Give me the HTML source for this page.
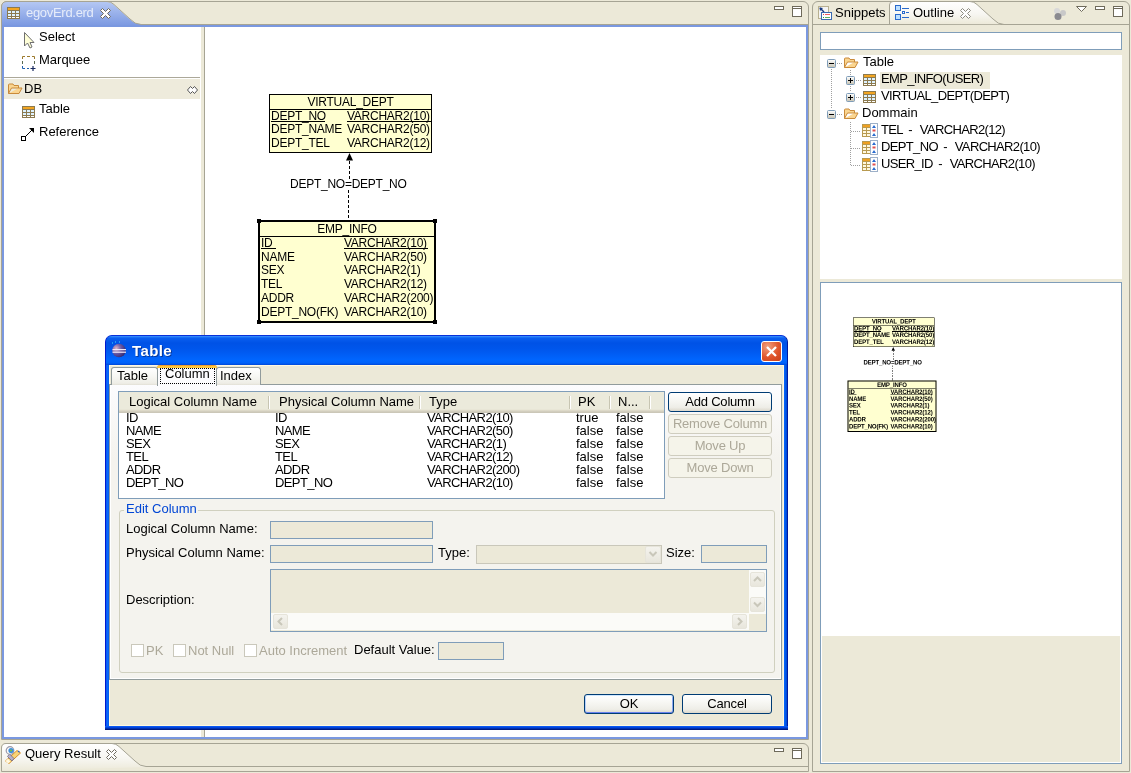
<!DOCTYPE html>
<html><head><meta charset="utf-8">
<style>
*{box-sizing:border-box;margin:0;padding:0}
html,body{width:1131px;height:773px;overflow:hidden;background:#ECE9D8;font-family:"Liberation Sans",sans-serif;font-size:13px;color:#000}
.a{position:absolute}
.t{position:absolute;white-space:nowrap;line-height:14px;will-change:transform}
svg{position:absolute;overflow:visible}
.btn{position:absolute;border:1px solid #003C74;border-radius:3px;background:linear-gradient(#FFFFFF,#F6F6F2 45%,#EEEDE7 80%,#DCD8CC);text-align:center;line-height:18px;font-size:13px;letter-spacing:-0.2px;will-change:transform}
.btnd{position:absolute;border:1px solid #CFCDBF;border-radius:3px;background:#F5F4EA;text-align:center;line-height:18px;color:#ACA899;font-size:13px;letter-spacing:-0.2px;will-change:transform}
.fld{position:absolute;border:1px solid #7F9DB9;background:#ECE9D8}
.chk{position:absolute;width:13px;height:13px;border:1px solid #CAC8BB;background:#fff}
</style></head><body>

<div class="a" style="left:1px;top:1px;width:808px;height:739px;border:1px solid #A6A494;border-radius:6px 6px 0 0;background:#ECE9D8"></div>
<svg style="left:0px;top:0px" width="160" height="27" viewBox="0 0 160 27">
  <defs><linearGradient id="gtab" x1="0" y1="0" x2="0" y2="1"><stop offset="0" stop-color="#B4C7F3"/><stop offset="1" stop-color="#7896E0"/></linearGradient></defs>
  <path d="M2,27 L2,7 Q2,2 7,2 L107,2 Q111,2 114,5 L130,19.5 Q135,24 141,24 L160,24 L160,27 Z" fill="url(#gtab)"/>
  <path d="M1.5,25 L1.5,7 Q1.5,1.5 7,1.5 L107,1.5 Q111,1.5 114,4.5 L130,19 Q135,24.5 141,24.5 L160,24.5" fill="none" stroke="#A6A494" stroke-width="1"/></svg>
<div class="a" style="left:142px;top:24px;width:667px;height:1px;background:#A6A494"></div>
<div class="a" style="left:2px;top:25px;width:806px;height:714px;border:2px solid #7A98E0;background:#fff"></div>
<svg style="left:7px;top:7px" width="13" height="12" viewBox="0 0 13 12">
  <rect x="0" y="0" width="13" height="12" fill="#8C7A50"/>
  <rect x="1" y="1" width="11" height="2" fill="#F2A522"/>
  <g fill="#DDF2FF"><rect x="1" y="4" width="3" height="2"/><rect x="5" y="4" width="3" height="2"/><rect x="9" y="4" width="3" height="2"/>
  <rect x="1" y="7" width="3" height="2"/><rect x="5" y="7" width="3" height="2"/><rect x="9" y="7" width="3" height="2"/></g>
  <g fill="#fff"><rect x="1" y="10" width="3" height="1"/><rect x="5" y="10" width="3" height="1"/><rect x="9" y="10" width="3" height="1"/></g></svg>
<div class="t" style="left:26px;top:6px;font-size:13px;letter-spacing:-0.3px;color:#E6ECFA;">egovErd.erd</div>
<svg style="left:100px;top:8px" width="11" height="11" viewBox="0 0 11 11"><path d="M0.5,2.5 L2.5,0.5 L5.5,3.5 L8.5,0.5 L10.5,2.5 L7.5,5.5 L10.5,8.5 L8.5,10.5 L5.5,7.5 L2.5,10.5 L0.5,8.5 L3.5,5.5 Z" fill="#fff" stroke="#6E6A5E" stroke-width="1"/></svg>
<div class="a" style="left:774px;top:6px;width:10px;height:4px;border:1px solid #6E6A5A;background:#fff"></div>
<div class="a" style="left:792px;top:6px;width:10px;height:11px;border:1px solid #6E6A5A;box-shadow:inset 0 1px 0 #fff,inset 0 2px 0 #6E6A5A;background:#fff"></div>
<div class="a" style="left:201px;top:27px;width:3px;height:710px;background:#ECE9D8"></div>
<div class="a" style="left:204px;top:27px;width:1px;height:710px;background:#A6A494"></div>
<svg style="left:23px;top:31px" width="13" height="18" viewBox="0 0 13 18"><path d="M1.5,1.5 L1.5,15 L4.5,12 L7,17 L9,16 L7,11.5 L11,11.5 Z" fill="#FFFFD8" stroke="#707070" stroke-width="1"/></svg>
<div class="t" style="left:39px;top:30px;font-size:13px;letter-spacing:0px;">Select</div>
<svg style="left:22px;top:56px" width="14" height="16" viewBox="0 0 14 16"><path d="M0.5,3 V0.5 H3 M5,0.5 H8 M10,0.5 H12.5 V3" fill="none" stroke="#9C7A2C"/><path d="M0.5,5 V8 M12.5,5 V8" fill="none" stroke="#5A6A50"/><path d="M0.5,10 V12.5 H3 M5,12.5 H7" fill="none" stroke="#2060B0"/><path d="M8.5,12.5 H13.5 M11,10 V15" stroke="#1A2A60" stroke-width="1.2"/></svg>
<div class="t" style="left:39px;top:53px;font-size:13px;letter-spacing:0px;">Marquee</div>
<div class="a" style="left:4px;top:77px;width:196px;height:1px;background:#ACA899"></div>
<div class="a" style="left:4px;top:78px;width:196px;height:1px;background:#fff"></div>
<div class="a" style="left:4px;top:79px;width:196px;height:20px;background:#EEEBDC"></div>
<svg style="left:7px;top:83px" width="16" height="12" viewBox="0 0 16 12"><path d="M1.5,10.5 L1.5,2 Q1.5,1 2.5,1 L6,1 L7,2.5 L11.5,2.5 L11.5,5 L4.5,5 L1.5,10.5 L12,10.5 L15,5 L11.5,5" fill="#FAD590" stroke="#C98A3A" stroke-width="1"/></svg>
<div class="t" style="left:24px;top:82px;font-size:13px;letter-spacing:0px;">DB</div>
<svg style="left:187px;top:86px" width="11" height="8" viewBox="0 0 11 8"><path d="M0.5,4 L3.5,0.5 L5.5,2.5 L7.5,0.5 L10.5,4 L7.5,7.5 L5.5,5.5 L3.5,7.5 Z" fill="#fff" stroke="#555" stroke-width="1"/></svg>
<svg style="left:22px;top:106px" width="13" height="12" viewBox="0 0 13 12">
  <rect x="0" y="0" width="13" height="12" fill="#8C7A50"/>
  <rect x="1" y="1" width="11" height="2" fill="#F2A522"/>
  <g fill="#DDF2FF"><rect x="1" y="4" width="3" height="2"/><rect x="5" y="4" width="3" height="2"/><rect x="9" y="4" width="3" height="2"/>
  <rect x="1" y="7" width="3" height="2"/><rect x="5" y="7" width="3" height="2"/><rect x="9" y="7" width="3" height="2"/></g>
  <g fill="#fff"><rect x="1" y="10" width="3" height="1"/><rect x="5" y="10" width="3" height="1"/><rect x="9" y="10" width="3" height="1"/></g></svg>
<div class="t" style="left:39px;top:102px;font-size:13px;letter-spacing:0px;">Table</div>
<svg style="left:21px;top:128px" width="14" height="13" viewBox="0 0 14 13"><rect x="0.5" y="8.5" width="4" height="4" fill="#fff" stroke="#000"/><path d="M4.5,8.5 L11,2" stroke="#000" stroke-width="1"/><path d="M8,0 L13,0 L13,5 Z" fill="#000"/></svg>
<div class="t" style="left:39px;top:125px;font-size:13px;letter-spacing:0px;">Reference</div>
<div class="a" style="left:205px;top:27px;width:600px;height:710px">
<div class="a" style="left:64px;top:67px;width:163px;height:59px;border:1px solid #000;background:#FFFFD0"></div>
<div class="a" style="left:65px;top:82px;width:161px;height:1px;background:#000"></div>
<div class="t" style="left:64px;top:68px;font-size:12px;letter-spacing:-0.25px;width:163px;text-align:center;">VIRTUAL_DEPT</div>
<div class="t" style="left:66px;top:82px;font-size:12px;letter-spacing:-0.25px;">DEPT_NO</div>
<div class="t" style="left:142px;top:82px;font-size:12px;letter-spacing:-0.25px;">VARCHAR2(10)</div>
<div class="t" style="left:66px;top:95px;font-size:12px;letter-spacing:-0.25px;">DEPT_NAME</div>
<div class="t" style="left:142px;top:95px;font-size:12px;letter-spacing:-0.25px;">VARCHAR2(50)</div>
<div class="t" style="left:66px;top:109px;font-size:12px;letter-spacing:-0.25px;">DEPT_TEL</div>
<div class="t" style="left:142px;top:109px;font-size:12px;letter-spacing:-0.25px;">VARCHAR2(12)</div>
<div class="a" style="left:66px;top:94px;width:54px;height:1px;background:#000"></div>
<div class="a" style="left:142px;top:94px;width:84px;height:1px;background:#000"></div>
<div class="a" style="left:53px;top:193px;width:178px;height:103px;border:2px solid #000;background:#FFFFD0"></div>
<div class="a" style="left:55px;top:209px;width:174px;height:1px;background:#000"></div>
<div class="t" style="left:53px;top:195px;font-size:12px;letter-spacing:-0.25px;width:178px;text-align:center;">EMP_INFO</div>
<div class="t" style="left:56px;top:209px;font-size:12px;letter-spacing:-0.25px;">ID</div>
<div class="t" style="left:139px;top:209px;font-size:12px;letter-spacing:-0.25px;">VARCHAR2(10)</div>
<div class="t" style="left:56px;top:223px;font-size:12px;letter-spacing:-0.25px;">NAME</div>
<div class="t" style="left:139px;top:223px;font-size:12px;letter-spacing:-0.25px;">VARCHAR2(50)</div>
<div class="t" style="left:56px;top:236px;font-size:12px;letter-spacing:-0.25px;">SEX</div>
<div class="t" style="left:139px;top:236px;font-size:12px;letter-spacing:-0.25px;">VARCHAR2(1)</div>
<div class="t" style="left:56px;top:250px;font-size:12px;letter-spacing:-0.25px;">TEL</div>
<div class="t" style="left:139px;top:250px;font-size:12px;letter-spacing:-0.25px;">VARCHAR2(12)</div>
<div class="t" style="left:56px;top:264px;font-size:12px;letter-spacing:-0.25px;">ADDR</div>
<div class="t" style="left:139px;top:264px;font-size:12px;letter-spacing:-0.25px;">VARCHAR2(200)</div>
<div class="t" style="left:56px;top:278px;font-size:12px;letter-spacing:-0.25px;">DEPT_NO(FK)</div>
<div class="t" style="left:139px;top:278px;font-size:12px;letter-spacing:-0.25px;">VARCHAR2(10)</div>
<div class="a" style="left:56px;top:221px;width:15px;height:1px;background:#000"></div>
<div class="a" style="left:139px;top:221px;width:84px;height:1px;background:#000"></div>
<div class="a" style="left:52px;top:192px;width:4px;height:4px;background:#000"></div>
<div class="a" style="left:228px;top:192px;width:4px;height:4px;background:#000"></div>
<div class="a" style="left:52px;top:293px;width:4px;height:4px;background:#000"></div>
<div class="a" style="left:228px;top:293px;width:4px;height:4px;background:#000"></div>
<div class="a" style="left:144px;top:134px;width:1px;height:19px;background:repeating-linear-gradient(#000 0 3px,transparent 3px 5px)"></div>
<div class="a" style="left:143px;top:163px;width:1px;height:30px;background:repeating-linear-gradient(#000 0 3px,transparent 3px 5px)"></div>
<svg style="left:141px;top:126px" width="7" height="8"><path d="M3.5,0 L7,7.5 L0,7.5 Z" fill="#000"/></svg>
<div class="t" style="left:85px;top:150px;font-size:12px;letter-spacing:-0.25px;">DEPT_NO=DEPT_NO</div>
</div>
<div class="a" style="left:1px;top:743px;width:808px;height:29px;border:1px solid #A6A494;border-radius:6px 6px 0 0;background:#ECE9D8"></div>
<svg style="left:0px;top:742px" width="170" height="26" viewBox="0 0 170 26">
  <defs><linearGradient id="gqw" x1="0" y1="0" x2="0" y2="1"><stop offset="0" stop-color="#FFFFFF"/><stop offset="0.55" stop-color="#F7F6F1"/><stop offset="1" stop-color="#ECE9D8"/></linearGradient></defs>
  <path d="M1.5,29 L1.5,6 Q1.5,1.5 6,1.5 L112,1.5 Q116,1.5 119,4.5 L135,19 Q140,24.5 146,24.5 L170,24.5" fill="url(#gqw)" stroke="#A6A494" stroke-width="1"/></svg>
<div class="a" style="left:147px;top:766px;width:662px;height:1px;background:#A6A494"></div>
<svg style="left:4px;top:746px" width="18" height="18" viewBox="0 0 18 18">
  <path d="M1.5,15 L13,4.5 L16.5,7 L5,17.5 Z" fill="#F8D478" stroke="#D89028" stroke-width="1"/>
  <path d="M1.5,15 L4,12.8 L6.5,15.5 L4,17.5 Z" fill="#FFF8E0"/>
  <path d="M14,5 L15.5,6.2" stroke="#3060C0" stroke-width="1.2"/>
  <path d="M5.5,8 L10,12.5 L8,15 L3.5,10.5 Z" fill="#B8B0C8" stroke="#706880" stroke-width="0.8"/>
  <circle cx="6" cy="4.5" r="3.8" fill="none" stroke="#9A98A8" stroke-width="1.2"/>
  <circle cx="7" cy="4.5" r="2.6" fill="#3A90E0"/><circle cx="7" cy="4.5" r="1.1" fill="#7CC040"/></svg>
<div class="t" style="left:25px;top:747px;font-size:13px;letter-spacing:0px;">Query Result</div>
<svg style="left:106px;top:749px" width="11" height="11" viewBox="0 0 11 11"><path d="M0.5,2.5 L2.5,0.5 L5.5,3.5 L8.5,0.5 L10.5,2.5 L7.5,5.5 L10.5,8.5 L8.5,10.5 L5.5,7.5 L2.5,10.5 L0.5,8.5 L3.5,5.5 Z" fill="#fff" stroke="#6E6A5E" stroke-width="1"/></svg>
<div class="a" style="left:774px;top:748px;width:10px;height:4px;border:1px solid #6E6A5A;background:#fff"></div>
<div class="a" style="left:792px;top:748px;width:10px;height:11px;border:1px solid #6E6A5A;box-shadow:inset 0 1px 0 #fff,inset 0 2px 0 #6E6A5A;background:#fff"></div>
<div class="a" style="left:812px;top:1px;width:318px;height:771px;border:1px solid #A6A494;border-radius:6px 6px 0 0;background:#ECE9D8"></div>
<div class="a" style="left:813px;top:24px;width:316px;height:1px;background:#A6A494"></div>
<svg style="left:812px;top:0px" width="319" height="26" viewBox="0 0 319 26">
  <defs><linearGradient id="gow" x1="0" y1="0" x2="0" y2="1"><stop offset="0" stop-color="#FFFFFF"/><stop offset="0.55" stop-color="#F7F6F1"/><stop offset="1" stop-color="#ECE9D8"/></linearGradient></defs>
  <path d="M77.5,24 L77.5,5 Q77.5,1.5 81,1.5 L158,1.5 Q162,1.5 165,4.5 L181,19 Q186,24.5 192,24.5 L317,24.5" fill="url(#gow)" stroke="#A6A494" stroke-width="1"/></svg>
<svg style="left:818px;top:6px" width="14" height="14" viewBox="0 0 14 14">
  <rect x="0.5" y="0.5" width="10" height="12" fill="#F4F4F4" stroke="#B8B090"/>
  <path d="M2,2 L6,6" stroke="#1A3A80" stroke-width="1.5"/><path d="M1.5,1.5 L5,2 L2,5 Z" fill="#1A3A80"/>
  <rect x="3.5" y="6.5" width="10" height="7" fill="#fff" stroke="#3A6AB0"/>
  <rect x="5" y="8" width="1" height="1" fill="#E04040"/><rect x="7" y="8" width="5" height="1" fill="#F06060"/>
  <rect x="5" y="11" width="1" height="1" fill="#20A040"/><rect x="7" y="11" width="5" height="1" fill="#60B060"/></svg>
<div class="t" style="left:835px;top:6px;font-size:13px;letter-spacing:0px;">Snippets</div>
<svg style="left:895px;top:5px" width="14" height="15" viewBox="0 0 14 15">
  <rect x="0.5" y="0.5" width="5" height="5" fill="#BDE0FF" stroke="#2A6ACC"/>
  <rect x="0.5" y="9.5" width="5" height="5" fill="#BDE0FF" stroke="#2A6ACC"/>
  <rect x="7" y="3" width="7" height="1" fill="#2A6ACC"/><rect x="7.5" y="6.5" width="2" height="2" fill="#fff" stroke="#2A6ACC"/><rect x="11" y="7" width="3" height="1" fill="#2A6ACC"/><rect x="7" y="12" width="7" height="1" fill="#2A6ACC"/></svg>
<div class="t" style="left:913px;top:6px;font-size:13px;letter-spacing:0px;">Outline</div>
<svg style="left:960px;top:8px" width="11" height="11" viewBox="0 0 11 11"><path d="M0.5,2.5 L2.5,0.5 L5.5,3.5 L8.5,0.5 L10.5,2.5 L7.5,5.5 L10.5,8.5 L8.5,10.5 L5.5,7.5 L2.5,10.5 L0.5,8.5 L3.5,5.5 Z" fill="#fff" stroke="#8C8A80" stroke-width="1"/></svg>
<svg style="left:1053px;top:7px" width="15" height="14" viewBox="0 0 15 14"><circle cx="4" cy="4" r="3" fill="#D8D8D8"/><circle cx="10" cy="6" r="3" fill="#C8C8C8"/><circle cx="5" cy="9.5" r="3.5" fill="#8A8A90"/></svg>
<svg style="left:1076px;top:6px" width="11" height="6" viewBox="0 0 11 6"><path d="M0.5,0.5 L10.5,0.5 L5.5,5.5 Z" fill="#fff" stroke="#6E6A5A"/></svg>
<div class="a" style="left:1095px;top:6px;width:10px;height:4px;border:1px solid #6E6A5A;background:#fff"></div>
<div class="a" style="left:1113px;top:6px;width:10px;height:11px;border:1px solid #6E6A5A;box-shadow:inset 0 1px 0 #fff,inset 0 2px 0 #6E6A5A;background:#fff"></div>
<div class="a" style="left:820px;top:32px;width:302px;height:18px;border:1px solid #7F9DB9;background:#fff"></div>
<div class="a" style="left:820px;top:55px;width:302px;height:224px;background:#fff"></div>
<div class="a" style="left:880px;top:72px;width:110px;height:17px;background:#ECE9D8"></div>
<div class="a" style="left:831px;top:69px;width:1px;height:40px;background:repeating-linear-gradient(#A0A0A0 0 1px,transparent 1px 2px)"></div>
<div class="a" style="left:837px;top:63px;width:5px;height:1px;background:repeating-linear-gradient(90deg,#A0A0A0 0 1px,transparent 1px 2px)"></div>
<div class="a" style="left:837px;top:114px;width:5px;height:1px;background:repeating-linear-gradient(90deg,#A0A0A0 0 1px,transparent 1px 2px)"></div>
<div class="a" style="left:850px;top:70px;width:1px;height:22px;background:repeating-linear-gradient(#A0A0A0 0 1px,transparent 1px 2px)"></div>
<div class="a" style="left:856px;top:80px;width:6px;height:1px;background:repeating-linear-gradient(90deg,#A0A0A0 0 1px,transparent 1px 2px)"></div>
<div class="a" style="left:856px;top:97px;width:6px;height:1px;background:repeating-linear-gradient(90deg,#A0A0A0 0 1px,transparent 1px 2px)"></div>
<div class="a" style="left:850px;top:122px;width:1px;height:44px;background:repeating-linear-gradient(#A0A0A0 0 1px,transparent 1px 2px)"></div>
<div class="a" style="left:851px;top:131px;width:10px;height:1px;background:repeating-linear-gradient(90deg,#A0A0A0 0 1px,transparent 1px 2px)"></div>
<div class="a" style="left:851px;top:148px;width:10px;height:1px;background:repeating-linear-gradient(90deg,#A0A0A0 0 1px,transparent 1px 2px)"></div>
<div class="a" style="left:851px;top:165px;width:10px;height:1px;background:repeating-linear-gradient(90deg,#A0A0A0 0 1px,transparent 1px 2px)"></div>
<svg style="left:827px;top:59px" width="9" height="9" viewBox="0 0 9 9"><defs><linearGradient id="gx82759" x1="0" y1="0" x2="0" y2="1"><stop offset="0" stop-color="#fff"/><stop offset="1" stop-color="#C6C2B2"/></linearGradient></defs><rect x="0.5" y="0.5" width="8" height="8" rx="1" fill="url(#gx82759)" stroke="#7F9DB9"/><path d="M2,4.5 h5" stroke="#000" stroke-width="1"/></svg>
<svg style="left:843px;top:57px" width="16" height="12" viewBox="0 0 16 12"><path d="M1.5,10.5 L1.5,2 Q1.5,1 2.5,1 L6,1 L7,2.5 L11.5,2.5 L11.5,5 L4.5,5 L1.5,10.5 L12,10.5 L15,5 L11.5,5" fill="#FAD590" stroke="#C98A3A" stroke-width="1"/></svg>
<svg style="left:846px;top:76px" width="9" height="9" viewBox="0 0 9 9"><defs><linearGradient id="gx84676" x1="0" y1="0" x2="0" y2="1"><stop offset="0" stop-color="#fff"/><stop offset="1" stop-color="#C6C2B2"/></linearGradient></defs><rect x="0.5" y="0.5" width="8" height="8" rx="1" fill="url(#gx84676)" stroke="#7F9DB9"/><path d="M2,4.5 h5" stroke="#000" stroke-width="1"/><path d="M4.5,2 v5" stroke="#000" stroke-width="1"/></svg>
<svg style="left:863px;top:74px" width="13" height="12" viewBox="0 0 13 12">
  <rect x="0" y="0" width="13" height="12" fill="#8C7A50"/>
  <rect x="1" y="1" width="11" height="2" fill="#F2A522"/>
  <g fill="#DDF2FF"><rect x="1" y="4" width="3" height="2"/><rect x="5" y="4" width="3" height="2"/><rect x="9" y="4" width="3" height="2"/>
  <rect x="1" y="7" width="3" height="2"/><rect x="5" y="7" width="3" height="2"/><rect x="9" y="7" width="3" height="2"/></g>
  <g fill="#fff"><rect x="1" y="10" width="3" height="1"/><rect x="5" y="10" width="3" height="1"/><rect x="9" y="10" width="3" height="1"/></g></svg>
<svg style="left:846px;top:93px" width="9" height="9" viewBox="0 0 9 9"><defs><linearGradient id="gx84693" x1="0" y1="0" x2="0" y2="1"><stop offset="0" stop-color="#fff"/><stop offset="1" stop-color="#C6C2B2"/></linearGradient></defs><rect x="0.5" y="0.5" width="8" height="8" rx="1" fill="url(#gx84693)" stroke="#7F9DB9"/><path d="M2,4.5 h5" stroke="#000" stroke-width="1"/><path d="M4.5,2 v5" stroke="#000" stroke-width="1"/></svg>
<svg style="left:863px;top:91px" width="13" height="12" viewBox="0 0 13 12">
  <rect x="0" y="0" width="13" height="12" fill="#8C7A50"/>
  <rect x="1" y="1" width="11" height="2" fill="#F2A522"/>
  <g fill="#DDF2FF"><rect x="1" y="4" width="3" height="2"/><rect x="5" y="4" width="3" height="2"/><rect x="9" y="4" width="3" height="2"/>
  <rect x="1" y="7" width="3" height="2"/><rect x="5" y="7" width="3" height="2"/><rect x="9" y="7" width="3" height="2"/></g>
  <g fill="#fff"><rect x="1" y="10" width="3" height="1"/><rect x="5" y="10" width="3" height="1"/><rect x="9" y="10" width="3" height="1"/></g></svg>
<svg style="left:827px;top:110px" width="9" height="9" viewBox="0 0 9 9"><defs><linearGradient id="gx827110" x1="0" y1="0" x2="0" y2="1"><stop offset="0" stop-color="#fff"/><stop offset="1" stop-color="#C6C2B2"/></linearGradient></defs><rect x="0.5" y="0.5" width="8" height="8" rx="1" fill="url(#gx827110)" stroke="#7F9DB9"/><path d="M2,4.5 h5" stroke="#000" stroke-width="1"/></svg>
<svg style="left:843px;top:108px" width="16" height="12" viewBox="0 0 16 12"><path d="M1.5,10.5 L1.5,2 Q1.5,1 2.5,1 L6,1 L7,2.5 L11.5,2.5 L11.5,5 L4.5,5 L1.5,10.5 L12,10.5 L15,5 L11.5,5" fill="#FAD590" stroke="#C98A3A" stroke-width="1"/></svg>
<svg style="left:862px;top:123px" width="16" height="15" viewBox="0 0 16 15">
  <rect x="0" y="1" width="9" height="13" fill="#B89A50"/><rect x="1" y="2" width="8" height="2" fill="#F0A020"/>
  <g fill="#FFF8E0"><rect x="1" y="5" width="3" height="2"/><rect x="5" y="5" width="3" height="2"/><rect x="1" y="8" width="3" height="2"/><rect x="5" y="8" width="3" height="2"/><rect x="1" y="11" width="3" height="2"/><rect x="5" y="11" width="3" height="2"/></g>
  <rect x="8.5" y="0.5" width="7" height="14" fill="#fff" stroke="#9DB0C8"/>
  <path d="M12,2 L14,5 L10,5 Z M12,10 L14,13 L10,13 Z" fill="#2A6CD0"/><rect x="10.5" y="6.5" width="3" height="2" fill="#E05050"/></svg>
<svg style="left:862px;top:140px" width="16" height="15" viewBox="0 0 16 15">
  <rect x="0" y="1" width="9" height="13" fill="#B89A50"/><rect x="1" y="2" width="8" height="2" fill="#F0A020"/>
  <g fill="#FFF8E0"><rect x="1" y="5" width="3" height="2"/><rect x="5" y="5" width="3" height="2"/><rect x="1" y="8" width="3" height="2"/><rect x="5" y="8" width="3" height="2"/><rect x="1" y="11" width="3" height="2"/><rect x="5" y="11" width="3" height="2"/></g>
  <rect x="8.5" y="0.5" width="7" height="14" fill="#fff" stroke="#9DB0C8"/>
  <path d="M12,2 L14,5 L10,5 Z M12,10 L14,13 L10,13 Z" fill="#2A6CD0"/><rect x="10.5" y="6.5" width="3" height="2" fill="#E05050"/></svg>
<svg style="left:862px;top:157px" width="16" height="15" viewBox="0 0 16 15">
  <rect x="0" y="1" width="9" height="13" fill="#B89A50"/><rect x="1" y="2" width="8" height="2" fill="#F0A020"/>
  <g fill="#FFF8E0"><rect x="1" y="5" width="3" height="2"/><rect x="5" y="5" width="3" height="2"/><rect x="1" y="8" width="3" height="2"/><rect x="5" y="8" width="3" height="2"/><rect x="1" y="11" width="3" height="2"/><rect x="5" y="11" width="3" height="2"/></g>
  <rect x="8.5" y="0.5" width="7" height="14" fill="#fff" stroke="#9DB0C8"/>
  <path d="M12,2 L14,5 L10,5 Z M12,10 L14,13 L10,13 Z" fill="#2A6CD0"/><rect x="10.5" y="6.5" width="3" height="2" fill="#E05050"/></svg>
<div class="t" style="left:863px;top:55px;font-size:13px;letter-spacing:0px;">Table</div>
<div class="t" style="left:881px;top:72px;font-size:13px;letter-spacing:-0.65px;">EMP_INFO(USER)</div>
<div class="t" style="left:881px;top:89px;font-size:13px;letter-spacing:-0.65px;">VIRTUAL_DEPT(DEPT)</div>
<div class="t" style="left:862px;top:106px;font-size:13px;letter-spacing:0px;">Dommain</div>
<div class="t" style="left:881px;top:123px;font-size:13px;letter-spacing:-0.65px;">TEL<span style="letter-spacing:1.8px"> - </span>VARCHAR2(12)</div>
<div class="t" style="left:881px;top:140px;font-size:13px;letter-spacing:-0.65px;">DEPT_NO<span style="letter-spacing:1.8px"> - </span>VARCHAR2(10)</div>
<div class="t" style="left:881px;top:157px;font-size:13px;letter-spacing:-0.65px;">USER_ID<span style="letter-spacing:1.8px"> - </span>VARCHAR2(10)</div>
<div class="a" style="left:820px;top:282px;width:302px;height:482px;border:1px solid #7F9DB9;background:#fff"></div>
<div class="a" style="left:821px;top:283.5px;width:600px;height:710px;transform:scale(0.5);transform-origin:0 0">
<div class="a" style="left:64px;top:67px;width:163px;height:59px;border:1px solid #000;background:#FFFFD0"></div>
<div class="a" style="left:65px;top:82px;width:161px;height:1px;background:#000"></div>
<div class="t" style="left:64px;top:68px;font-size:12px;letter-spacing:-0.25px;font-weight:bold;width:163px;text-align:center;">VIRTUAL_DEPT</div>
<div class="t" style="left:66px;top:82px;font-size:12px;letter-spacing:-0.25px;font-weight:bold;">DEPT_NO</div>
<div class="t" style="left:142px;top:82px;font-size:12px;letter-spacing:-0.25px;font-weight:bold;">VARCHAR2(10)</div>
<div class="t" style="left:66px;top:95px;font-size:12px;letter-spacing:-0.25px;font-weight:bold;">DEPT_NAME</div>
<div class="t" style="left:142px;top:95px;font-size:12px;letter-spacing:-0.25px;font-weight:bold;">VARCHAR2(50)</div>
<div class="t" style="left:66px;top:109px;font-size:12px;letter-spacing:-0.25px;font-weight:bold;">DEPT_TEL</div>
<div class="t" style="left:142px;top:109px;font-size:12px;letter-spacing:-0.25px;font-weight:bold;">VARCHAR2(12)</div>
<div class="a" style="left:66px;top:94px;width:54px;height:1px;background:#000"></div>
<div class="a" style="left:142px;top:94px;width:84px;height:1px;background:#000"></div>
<div class="a" style="left:53px;top:193px;width:178px;height:103px;border:2px solid #000;background:#FFFFD0"></div>
<div class="a" style="left:55px;top:209px;width:174px;height:1px;background:#000"></div>
<div class="t" style="left:53px;top:195px;font-size:12px;letter-spacing:-0.25px;font-weight:bold;width:178px;text-align:center;">EMP_INFO</div>
<div class="t" style="left:56px;top:209px;font-size:12px;letter-spacing:-0.25px;font-weight:bold;">ID</div>
<div class="t" style="left:139px;top:209px;font-size:12px;letter-spacing:-0.25px;font-weight:bold;">VARCHAR2(10)</div>
<div class="t" style="left:56px;top:223px;font-size:12px;letter-spacing:-0.25px;font-weight:bold;">NAME</div>
<div class="t" style="left:139px;top:223px;font-size:12px;letter-spacing:-0.25px;font-weight:bold;">VARCHAR2(50)</div>
<div class="t" style="left:56px;top:236px;font-size:12px;letter-spacing:-0.25px;font-weight:bold;">SEX</div>
<div class="t" style="left:139px;top:236px;font-size:12px;letter-spacing:-0.25px;font-weight:bold;">VARCHAR2(1)</div>
<div class="t" style="left:56px;top:250px;font-size:12px;letter-spacing:-0.25px;font-weight:bold;">TEL</div>
<div class="t" style="left:139px;top:250px;font-size:12px;letter-spacing:-0.25px;font-weight:bold;">VARCHAR2(12)</div>
<div class="t" style="left:56px;top:264px;font-size:12px;letter-spacing:-0.25px;font-weight:bold;">ADDR</div>
<div class="t" style="left:139px;top:264px;font-size:12px;letter-spacing:-0.25px;font-weight:bold;">VARCHAR2(200)</div>
<div class="t" style="left:56px;top:278px;font-size:12px;letter-spacing:-0.25px;font-weight:bold;">DEPT_NO(FK)</div>
<div class="t" style="left:139px;top:278px;font-size:12px;letter-spacing:-0.25px;font-weight:bold;">VARCHAR2(10)</div>
<div class="a" style="left:56px;top:221px;width:15px;height:1px;background:#000"></div>
<div class="a" style="left:139px;top:221px;width:84px;height:1px;background:#000"></div>
<div class="a" style="left:144px;top:134px;width:1px;height:19px;background:repeating-linear-gradient(#000 0 3px,transparent 3px 5px)"></div>
<div class="a" style="left:143px;top:163px;width:1px;height:30px;background:repeating-linear-gradient(#000 0 3px,transparent 3px 5px)"></div>
<svg style="left:141px;top:126px" width="7" height="8"><path d="M3.5,0 L7,7.5 L0,7.5 Z" fill="#000"/></svg>
<div class="t" style="left:85px;top:150px;font-size:12px;letter-spacing:-0.25px;font-weight:bold;">DEPT_NO=DEPT_NO</div>
</div>
<div class="a" style="left:822px;top:636px;width:298px;height:126px;background:#ECE9D8"></div>
<div class="a" style="left:105px;top:335px;width:683px;height:395px;border-radius:7px 7px 0 0;background:#0055E5;border:1px solid #0019CF;border-top-color:#0831D9;border-right-color:#001AA0;border-bottom:none"></div>
<div class="a" style="left:106px;top:336px;width:681px;height:29px;border-radius:6px 6px 0 0;background:linear-gradient(#3D95FF 0,#0A5FF0 2px,#0052E6 7px,#0056EC 13px,#005EF6 19px,#0066FF 24px,#0062FA 27px,#0047D8 29px)"></div>
<div class="a" style="left:106px;top:365px;width:3px;height:361px;background:linear-gradient(90deg,#0A5AF0,#0A6AFE 60%,#0058EA)"></div>
<div class="a" style="left:784px;top:365px;width:3px;height:361px;background:linear-gradient(90deg,#0A6AFE,#0055E5 60%,#0048D0)"></div>
<div class="a" style="left:105px;top:726px;width:683px;height:4px;background:linear-gradient(#0A58F2 0,#0A58F2 25%,#0044DC 25%,#0044DC 50%,#0030B0 50%,#0030B0 75%,#001A80 75%)"></div>
<div class="a" style="left:109px;top:365px;width:675px;height:361px;background:#ECE9D8"></div>
<div class="a" style="left:109px;top:365px;width:675px;height:1px;background:#FFF8E0"></div>
<div class="a" style="left:109px;top:365px;width:1px;height:361px;background:#FFF8E0"></div>
<div class="a" style="left:109px;top:725px;width:675px;height:1px;background:#FFF8E0"></div>
<div class="a" style="left:783px;top:365px;width:1px;height:361px;background:#FFF8E0"></div>
<svg style="left:112px;top:343px" width="15" height="14" viewBox="0 0 15 14">
  <defs><radialGradient id="gecl" cx="0.3" cy="0.35" r="0.8"><stop offset="0" stop-color="#E0B8C8"/><stop offset="0.45" stop-color="#6A5AA8"/><stop offset="1" stop-color="#2A2068"/></radialGradient></defs>
  <circle cx="7" cy="7.5" r="6.8" fill="url(#gecl)"/>
  <rect x="0.5" y="6" width="13.5" height="1.2" fill="#F0E8F8"/><rect x="0.5" y="8.6" width="13.5" height="1.2" fill="#F0E8F8"/>
  <rect x="0" y="-0.5" width="1" height="1" fill="#40E0FF"/><rect x="3" y="-1.5" width="1" height="1" fill="#40E0FF"/><rect x="7" y="-1.5" width="1" height="1" fill="#40E0FF"/></svg>
<div class="t" style="left:133px;top:345px;color:#0A1E60;font-weight:bold;font-size:15px;letter-spacing:0.4px;opacity:0.6">Table</div>
<div class="t" style="left:132px;top:344px;color:#fff;font-weight:bold;font-size:15px;letter-spacing:0.4px">Table</div>
<div class="a" style="left:761px;top:341px;width:21px;height:21px;border:1px solid #fff;border-radius:3px;background:radial-gradient(circle at 30% 25%,#F0A080,#E0552C 55%,#C8401A)"></div>
<svg style="left:766px;top:346px" width="11" height="11" viewBox="0 0 11 11"><path d="M1,1 L10,10 M10,1 L1,10" stroke="#fff" stroke-width="2.3"/></svg>
<div class="a" style="left:109px;top:384px;width:673px;height:296px;border:1px solid #919B9C;background:linear-gradient(#FCFCFE,#F4F3EE 25%,#F4F3EE)"></div>
<div class="a" style="left:110px;top:385px;width:1px;height:293px;background:#fff"></div>
<div class="a" style="left:110px;top:678px;width:670px;height:1px;background:#fff"></div>
<div class="a" style="left:780px;top:385px;width:1px;height:294px;background:#fff"></div>
<div class="a" style="left:111px;top:367px;width:47px;height:18px;border:1px solid #919B9C;border-bottom:none;border-radius:3px 3px 0 0;background:linear-gradient(#FFFFFF,#F7F7F3 50%,#EEEDE6 90%,#E2E0D6)"></div>
<div class="t" style="left:117px;top:369px;font-size:13px;letter-spacing:0px;">Table</div>
<div class="a" style="left:216px;top:367px;width:45px;height:18px;border:1px solid #919B9C;border-bottom:none;border-radius:3px 3px 0 0;background:linear-gradient(#FFFFFF,#F7F7F3 50%,#EEEDE6 90%,#E2E0D6)"></div>
<div class="t" style="left:220px;top:369px;font-size:13px;letter-spacing:0px;">Index</div>
<div class="a" style="left:157px;top:365px;width:60px;height:21px;border:1px solid #919B9C;border-bottom:none;border-top:none;border-radius:3px 3px 0 0;background:#FCFCFE"></div>
<div class="a" style="left:157px;top:365px;width:60px;height:3px;border-radius:3px 3px 0 0;background:linear-gradient(#E68B2C,#FFC73C 50%,#FFC73C)"></div>
<div class="a" style="left:160px;top:368px;width:55px;height:16px;border:1px dotted #000"></div>
<div class="t" style="left:165px;top:367px;font-size:13px;letter-spacing:0px;">Column</div>
<div class="a" style="left:118px;top:391px;width:547px;height:108px;border:1px solid #7F9DB9;background:#fff"></div>
<div class="a" style="left:119px;top:392px;width:545px;height:21px;background:linear-gradient(#EBEADB,#EBEADB 82%,#E2DECD 86%,#D6D2C2 91%,#CBC7B8 96%)"></div>
<div class="a" style="left:268px;top:396px;width:2px;height:13px;border-left:1px solid #C7C5B2;border-right:1px solid #fff"></div>
<div class="a" style="left:419px;top:396px;width:2px;height:13px;border-left:1px solid #C7C5B2;border-right:1px solid #fff"></div>
<div class="a" style="left:569px;top:396px;width:2px;height:13px;border-left:1px solid #C7C5B2;border-right:1px solid #fff"></div>
<div class="a" style="left:609px;top:396px;width:2px;height:13px;border-left:1px solid #C7C5B2;border-right:1px solid #fff"></div>
<div class="a" style="left:649px;top:396px;width:2px;height:13px;border-left:1px solid #C7C5B2;border-right:1px solid #fff"></div>
<div class="t" style="left:129px;top:395px;font-size:13px;letter-spacing:0px;">Logical Column Name</div>
<div class="t" style="left:279px;top:395px;font-size:13px;letter-spacing:0px;">Physical Column Name</div>
<div class="t" style="left:429px;top:395px;font-size:13px;letter-spacing:0px;">Type</div>
<div class="t" style="left:578px;top:395px;font-size:13px;letter-spacing:0px;">PK</div>
<div class="t" style="left:618px;top:395px;font-size:13px;letter-spacing:0px;">N...</div>
<div class="t" style="left:126px;top:411px;font-size:13px;letter-spacing:-0.6px;">ID</div>
<div class="t" style="left:275px;top:411px;font-size:13px;letter-spacing:-0.6px;">ID</div>
<div class="t" style="left:427px;top:411px;font-size:13px;letter-spacing:-0.6px;">VARCHAR2(10)</div>
<div class="t" style="left:576px;top:411px;font-size:13px;letter-spacing:0px;">true</div>
<div class="t" style="left:616px;top:411px;font-size:13px;letter-spacing:0px;">false</div>
<div class="t" style="left:126px;top:424px;font-size:13px;letter-spacing:-0.6px;">NAME</div>
<div class="t" style="left:275px;top:424px;font-size:13px;letter-spacing:-0.6px;">NAME</div>
<div class="t" style="left:427px;top:424px;font-size:13px;letter-spacing:-0.6px;">VARCHAR2(50)</div>
<div class="t" style="left:576px;top:424px;font-size:13px;letter-spacing:0px;">false</div>
<div class="t" style="left:616px;top:424px;font-size:13px;letter-spacing:0px;">false</div>
<div class="t" style="left:126px;top:437px;font-size:13px;letter-spacing:-0.6px;">SEX</div>
<div class="t" style="left:275px;top:437px;font-size:13px;letter-spacing:-0.6px;">SEX</div>
<div class="t" style="left:427px;top:437px;font-size:13px;letter-spacing:-0.6px;">VARCHAR2(1)</div>
<div class="t" style="left:576px;top:437px;font-size:13px;letter-spacing:0px;">false</div>
<div class="t" style="left:616px;top:437px;font-size:13px;letter-spacing:0px;">false</div>
<div class="t" style="left:126px;top:450px;font-size:13px;letter-spacing:-0.6px;">TEL</div>
<div class="t" style="left:275px;top:450px;font-size:13px;letter-spacing:-0.6px;">TEL</div>
<div class="t" style="left:427px;top:450px;font-size:13px;letter-spacing:-0.6px;">VARCHAR2(12)</div>
<div class="t" style="left:576px;top:450px;font-size:13px;letter-spacing:0px;">false</div>
<div class="t" style="left:616px;top:450px;font-size:13px;letter-spacing:0px;">false</div>
<div class="t" style="left:126px;top:463px;font-size:13px;letter-spacing:-0.6px;">ADDR</div>
<div class="t" style="left:275px;top:463px;font-size:13px;letter-spacing:-0.6px;">ADDR</div>
<div class="t" style="left:427px;top:463px;font-size:13px;letter-spacing:-0.6px;">VARCHAR2(200)</div>
<div class="t" style="left:576px;top:463px;font-size:13px;letter-spacing:0px;">false</div>
<div class="t" style="left:616px;top:463px;font-size:13px;letter-spacing:0px;">false</div>
<div class="t" style="left:126px;top:476px;font-size:13px;letter-spacing:-0.6px;">DEPT_NO</div>
<div class="t" style="left:275px;top:476px;font-size:13px;letter-spacing:-0.6px;">DEPT_NO</div>
<div class="t" style="left:427px;top:476px;font-size:13px;letter-spacing:-0.6px;">VARCHAR2(10)</div>
<div class="t" style="left:576px;top:476px;font-size:13px;letter-spacing:0px;">false</div>
<div class="t" style="left:616px;top:476px;font-size:13px;letter-spacing:0px;">false</div>
<div class="btn" style="left:668px;top:392px;width:104px;height:20px">Add Column</div>
<div class="btnd" style="left:668px;top:414px;width:104px;height:20px">Remove Column</div>
<div class="btnd" style="left:668px;top:436px;width:104px;height:20px">Move Up</div>
<div class="btnd" style="left:668px;top:458px;width:104px;height:20px">Move Down</div>
<div class="a" style="left:119px;top:510px;width:656px;height:163px;border:1px solid #D0D0BF;border-radius:3px"></div>
<div class="a" style="left:124px;top:505px;width:74px;height:10px;background:#F4F3EE"></div>
<div class="t" style="left:126px;top:502px;font-size:13px;letter-spacing:0px;color:#0046D5;">Edit Column</div>
<div class="t" style="left:126px;top:522px;font-size:13px;letter-spacing:0px;">Logical Column Name:</div>
<div class="fld" style="left:270px;top:521px;width:163px;height:18px"></div>
<div class="t" style="left:126px;top:546px;font-size:13px;letter-spacing:0px;">Physical Column Name:</div>
<div class="fld" style="left:270px;top:545px;width:163px;height:18px"></div>
<div class="t" style="left:438px;top:546px;font-size:13px;letter-spacing:0px;">Type:</div>
<div class="a" style="left:476px;top:545px;width:186px;height:19px;border:1px solid #C9C7BA;background:#ECE9D8"></div>
<div class="a" style="left:645px;top:546px;width:16px;height:17px;border:1px solid #E6E4DA;border-radius:2px;background:linear-gradient(#F4F3EE,#E8E6DC)"></div>
<svg style="left:648px;top:551px" width="10" height="7" viewBox="0 0 10 7"><path d="M1.5,1 L5,4.5 L8.5,1" fill="none" stroke="#C9C7BA" stroke-width="2"/></svg>
<div class="t" style="left:666px;top:546px;font-size:13px;letter-spacing:0px;">Size:</div>
<div class="fld" style="left:701px;top:545px;width:66px;height:18px"></div>
<div class="t" style="left:126px;top:593px;font-size:13px;letter-spacing:0px;">Description:</div>
<div class="fld" style="left:270px;top:569px;width:497px;height:63px"></div>
<div class="a" style="left:271px;top:613px;width:478px;height:17px;background:#FBFBF8"></div>
<div class="a" style="left:749px;top:570px;width:17px;height:44px;background:#FBFBF8"></div>
<div class="a" style="left:273px;top:614px;width:15px;height:15px;border:1px solid #E6E4DA;border-radius:2px;background:linear-gradient(#F4F3EE,#E8E6DC)"></div>
<svg style="left:276px;top:618px" width="9" height="7" viewBox="0 0 9 7"><path d="M6,0 L2.5,3.5 L6,7" fill="none" stroke="#C9C7BA" stroke-width="2"/></svg>
<div class="a" style="left:732px;top:614px;width:15px;height:15px;border:1px solid #E6E4DA;border-radius:2px;background:linear-gradient(#F4F3EE,#E8E6DC)"></div>
<svg style="left:735px;top:618px" width="9" height="7" viewBox="0 0 9 7"><path d="M3,0 L6.5,3.5 L3,7" fill="none" stroke="#C9C7BA" stroke-width="2"/></svg>
<div class="a" style="left:750px;top:572px;width:15px;height:15px;border:1px solid #E6E4DA;border-radius:2px;background:linear-gradient(#F4F3EE,#E8E6DC)"></div>
<svg style="left:753px;top:576px" width="9" height="7" viewBox="0 0 9 7"><path d="M1,5 L4.5,1.5 L8,5" fill="none" stroke="#C9C7BA" stroke-width="2"/></svg>
<div class="a" style="left:750px;top:597px;width:15px;height:15px;border:1px solid #E6E4DA;border-radius:2px;background:linear-gradient(#F4F3EE,#E8E6DC)"></div>
<svg style="left:753px;top:601px" width="9" height="7" viewBox="0 0 9 7"><path d="M1,1.5 L4.5,5 L8,1.5" fill="none" stroke="#C9C7BA" stroke-width="2"/></svg>
<div class="chk" style="left:131px;top:644px"></div>
<div class="t" style="left:146px;top:644px;font-size:13px;letter-spacing:0px;color:#ACA899;">PK</div>
<div class="chk" style="left:173px;top:644px"></div>
<div class="t" style="left:188px;top:644px;font-size:13px;letter-spacing:0px;color:#ACA899;">Not Null</div>
<div class="chk" style="left:244px;top:644px"></div>
<div class="t" style="left:259px;top:644px;font-size:13px;letter-spacing:0px;color:#ACA899;">Auto Increment</div>
<div class="t" style="left:354px;top:643px;font-size:13px;letter-spacing:0px;">Default Value:</div>
<div class="fld" style="left:438px;top:642px;width:66px;height:18px"></div>
<div class="btn" style="left:584px;top:694px;width:90px;height:20px;box-shadow:inset 0 1px 0 #CEE7FF,inset 0 -1px 0 #6982EE,inset 1px 0 0 #B9D1FA,inset -1px 0 0 #8DA8F0">OK</div>
<div class="btn" style="left:682px;top:694px;width:90px;height:20px">Cancel</div>
</body></html>
